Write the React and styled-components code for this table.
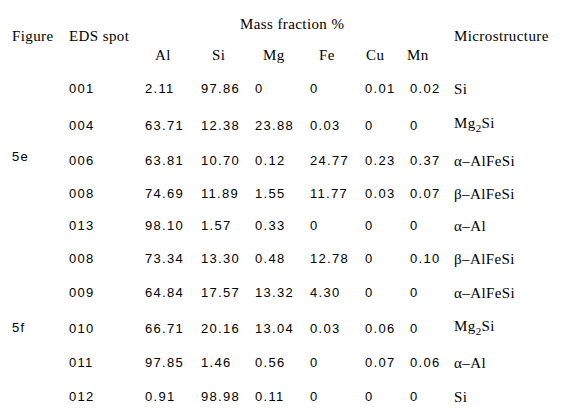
import styled, { createGlobalStyle } from 'styled-components';

const GlobalStyle = createGlobalStyle`
  html, body {
    margin: 0;
    background: #fff;
  }
  body {
    width: 568px;
    height: 416px;
    overflow: hidden;
  }
`;

// measured row pitch of the data rows
const ROW_HEIGHTS = [36, 37, 34, 32, 32, 33, 36, 35, 34, 34];

const ELEMENTS = [
  { name: 'Al', indent: 10 },
  { name: 'Si', indent: 11 },
  { name: 'Mg', indent: 8 },
  { name: 'Fe', indent: 9 },
  { name: 'Cu', indent: 1 },
  { name: 'Mn', indent: -3 },
];

const ROWS = [
  ['001', '2.11', '97.86', '0', '0', '0.01', '0.02', 'Si'],
  ['004', '63.71', '12.38', '23.88', '0.03', '0', '0', 'Mg2Si'],
  ['006', '63.81', '10.70', '0.12', '24.77', '0.23', '0.37', 'α–AlFeSi'],
  ['008', '74.69', '11.89', '1.55', '11.77', '0.03', '0.07', 'β–AlFeSi'],
  ['013', '98.10', '1.57', '0.33', '0', '0', '0', 'α–Al'],
  ['008', '73.34', '13.30', '0.48', '12.78', '0', '0.10', 'β–AlFeSi'],
  ['009', '64.84', '17.57', '13.32', '4.30', '0', '0', 'α–AlFeSi'],
  ['010', '66.71', '20.16', '13.04', '0.03', '0.06', '0', 'Mg2Si'],
  ['011', '97.85', '1.46', '0.56', '0', '0.07', '0.06', 'α–Al'],
  ['012', '0.91', '98.98', '0.11', '0', '0', '0', 'Si'],
];

const FIGURES = [
  { label: '5e', from: 0 },
  { label: '5f', from: 5 },
];

const Table = styled.div`
  display: grid;
  grid-template-columns: 57px 76px 56px 54px 55px 55px 45px 44px 1fr;
  grid-template-rows: 47px 24px ${ROW_HEIGHTS.map(h => `${h}px`).join(' ')};
  padding-left: 12px;
  color: #000;
`;

const serif = `
  font-family: "Liberation Serif", "Times New Roman", serif;
  font-size: 15px;
  letter-spacing: 0.4px;
  line-height: 16px;
`;

const sans = `
  font-family: "Liberation Sans", Arial, sans-serif;
  font-size: 13px;
  letter-spacing: 1.3px;
  line-height: 16px;
`;

const Heading = styled.div`
  ${serif}
  grid-column: ${({ $col }) => $col};
  grid-row: 1 / span 2;
  align-self: center;
  white-space: nowrap;
`;

const GroupTitle = styled.div`
  ${serif}
  grid-column: 3 / span 6;
  grid-row: 1;
  align-self: center;
  padding-left: 95px;
  white-space: nowrap;
`;

const ElementHead = styled.div`
  ${serif}
  grid-column: ${({ $col }) => $col};
  grid-row: 2;
  align-self: start;
  margin-left: ${({ $indent }) => $indent}px;
`;

const FigureCell = styled.div`
  ${sans}
  grid-column: 1;
  grid-row: ${({ $row }) => $row} / span 5;
  align-self: center;
`;

const Value = styled.div`
  ${sans}
  grid-column: ${({ $col }) => $col};
  grid-row: ${({ $row }) => $row};
  align-self: center;
  white-space: nowrap;
`;

const Phase = styled.div`
  ${serif}
  grid-column: 9;
  grid-row: ${({ $row }) => $row};
  align-self: center;
  white-space: nowrap;
  margin-bottom: ${({ $lifted }) => ($lifted ? '6px' : '0')};
`;

const Sub = styled.sub`
  font-size: 11px;
  line-height: 0;
  vertical-align: -4px;
`;

const PhaseName = ({ name }) => {
  if (name === 'Mg2Si') {
    return <>Mg<Sub>2</Sub>Si</>;
  }
  return name;
};

const App = () => (
  <>
    <GlobalStyle />
    <Table>
      <Heading $col={1}>Figure</Heading>
      <Heading $col={2}>EDS spot</Heading>
      <GroupTitle>Mass fraction %</GroupTitle>
      {ELEMENTS.map((el, i) => (
        <ElementHead key={el.name} $col={i + 3} $indent={el.indent}>{el.name}</ElementHead>
      ))}
      <Heading $col={9}>Microstructure</Heading>

      {FIGURES.map(f => (
        <FigureCell key={f.label} $row={f.from + 3}>{f.label}</FigureCell>
      ))}

      {ROWS.map((row, r) => (
        row.slice(0, 7).map((v, c) => (
          <Value key={`${r}-${c}`} $row={r + 3} $col={c + 2}>{v}</Value>
        )).concat(
          <Phase key={`${r}-p`} $row={r + 3} $lifted={row[7] === 'Mg2Si'}>
            <PhaseName name={row[7]} />
          </Phase>
        )
      ))}
    </Table>
  </>
);

export default App;
